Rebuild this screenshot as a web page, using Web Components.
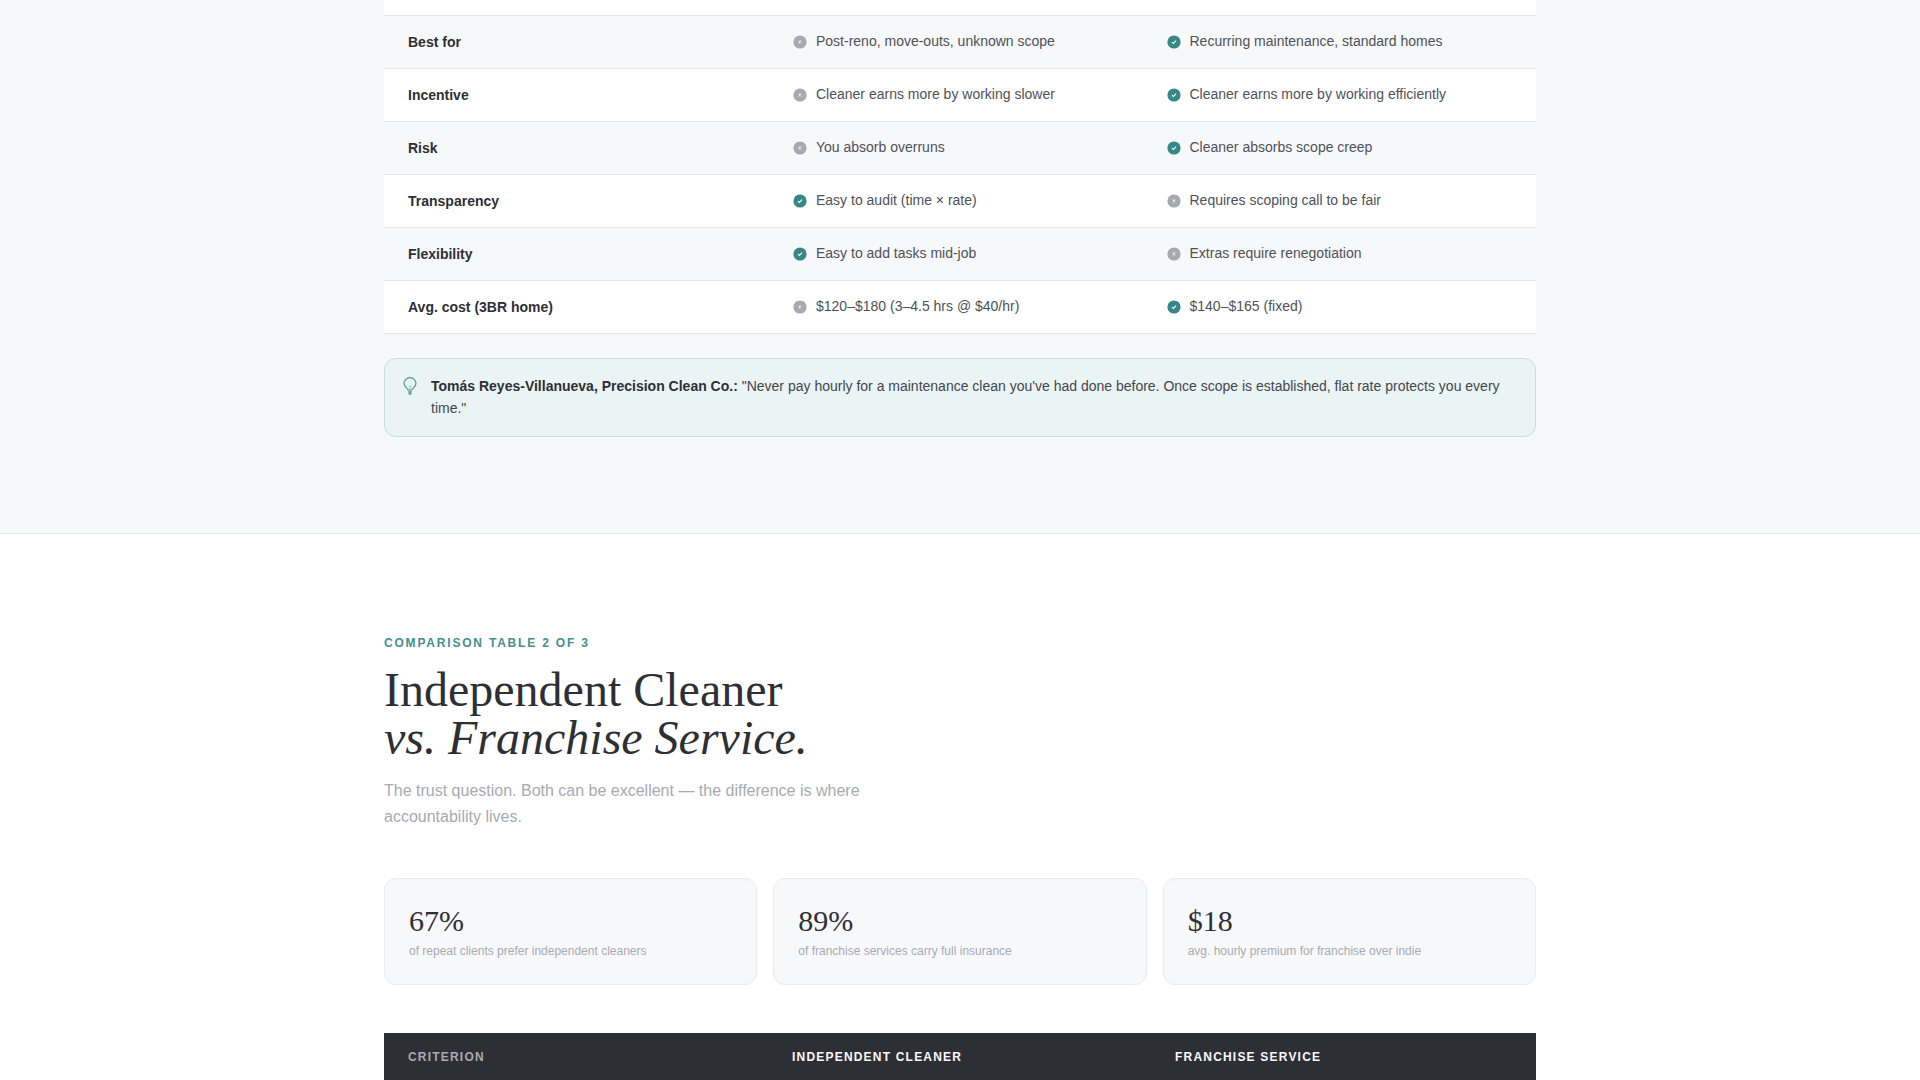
<!DOCTYPE html>
<html><head><meta charset="utf-8">
<style>
html,body{margin:0;padding:0;height:1080px;overflow:hidden;background:#fff;font-family:"Liberation Sans",Arial,sans-serif}
</style></head><body>
<cmp-page>
  <cmp-section tone="alt" class="first">
    <cmp-table cols="385px 373.5px 393.5px">
      <cmp-strip></cmp-strip>
      <cmp-row label="Best for" shade><cmp-val kind="no">Post-reno, move-outs, unknown scope</cmp-val><cmp-val kind="yes">Recurring maintenance, standard homes</cmp-val></cmp-row>
      <cmp-row label="Incentive"><cmp-val kind="no">Cleaner earns more by working slower</cmp-val><cmp-val kind="yes">Cleaner earns more by working efficiently</cmp-val></cmp-row>
      <cmp-row label="Risk" shade><cmp-val kind="no">You absorb overruns</cmp-val><cmp-val kind="yes">Cleaner absorbs scope creep</cmp-val></cmp-row>
      <cmp-row label="Transparency"><cmp-val kind="yes">Easy to audit (time × rate)</cmp-val><cmp-val kind="no">Requires scoping call to be fair</cmp-val></cmp-row>
      <cmp-row label="Flexibility" shade><cmp-val kind="yes">Easy to add tasks mid-job</cmp-val><cmp-val kind="no">Extras require renegotiation</cmp-val></cmp-row>
      <cmp-row label="Avg. cost (3BR home)"><cmp-val kind="no">$120–$180 (3–4.5 hrs @ $40/hr)</cmp-val><cmp-val kind="yes">$140–$165 (fixed)</cmp-val></cmp-row>
    </cmp-table>
    <cmp-callout><strong>Tomás Reyes-Villanueva, Precision Clean Co.:</strong> "Never pay hourly for a maintenance clean you've had done before. Once scope is established, flat rate protects you every time."</cmp-callout>
  </cmp-section>
  <cmp-section>
    <cmp-heading eyebrow="COMPARISON TABLE 2 OF 3" line1="Independent Cleaner" line2="vs. Franchise Service.">The trust question. Both can be excellent — the difference is where accountability lives.</cmp-heading>
    <cmp-stats>
      <cmp-stat value="67%">of repeat clients prefer independent cleaners</cmp-stat>
      <cmp-stat value="89%">of franchise services carry full insurance</cmp-stat>
      <cmp-stat value="$18">avg. hourly premium for franchise over indie</cmp-stat>
    </cmp-stats>
    <cmp-table cols="384px 383px 385px">
      <cmp-head a="CRITERION" b="INDEPENDENT CLEANER" c="FRANCHISE SERVICE"></cmp-head>
    </cmp-table>
  </cmp-section>
</cmp-page>
<script>
function def(name, html){
  customElements.define(name, class extends HTMLElement{
    connectedCallback(){
      if(this.shadowRoot) return;
      const r=this.attachShadow({mode:'open'});
      r.innerHTML=typeof html==='function'?html(this):html;
    }
  });
}
def('cmp-page',`<style>:host{display:block;height:1080px;overflow:hidden}</style><slot></slot>`);
def('cmp-section',el=>{
  const alt=el.getAttribute('tone')==='alt', first=el.classList.contains('first');
  return `<style>:host{display:block;background:${alt?'#f7f8fa':'#fff'};${alt?'border-bottom:1px solid #e5e7eb;':''}padding:${first?'0':'96px'} 384px 96px}</style><slot></slot>`;
});
def('cmp-table',el=>`<style>:host{display:block;--cols:${el.getAttribute('cols')}}</style><slot></slot>`);
def('cmp-strip',`<style>:host{display:block;height:15px;background:#fff;border-bottom:1px solid #e5e7eb}</style>`);
def('cmp-row',el=>`<style>
:host{display:grid;grid-template-columns:var(--cols);height:52px;align-items:center;box-sizing:content-box;border-bottom:1px solid #e5e7eb;background:${el.hasAttribute('shade')?'#f7f8fa':'#fff'}}
.l{padding-left:24px;font:700 14px/20px "Liberation Sans",sans-serif;color:#2e2f35}
</style><div class="l">${el.getAttribute('label')}</div><slot></slot>`);
const ICONS={
 yes:`<svg width="14" height="14" viewBox="0 0 14 14"><circle cx="7" cy="7" r="6.6" fill="#358886"/><path d="M5 7.2 6.4 8.5 9 5.6" fill="none" stroke="#fff" stroke-width="1.1"/></svg>`,
 no:`<svg width="14" height="14" viewBox="0 0 14 14"><circle cx="7" cy="7" r="6.6" fill="#a7a9b1"/><path d="M5.7 5.7 8.3 8.3M8.3 5.7 5.7 8.3" fill="none" stroke="#fff" stroke-width="1.1" opacity=".75"/></svg>`
};
def('cmp-val',el=>`<style>
:host{display:flex;align-items:center;gap:9px;padding:0 0 2px 24px;font:400 14px/20px "Liberation Sans",sans-serif;color:#4f5158}
svg{flex:none;position:relative;top:1px}
</style>${ICONS[el.getAttribute('kind')]}<span><slot></slot></span>`);
def('cmp-callout',`<style>
:host{display:flex;gap:13px;align-items:flex-start;margin-top:24px;padding:16px 20px 17px 17px;background:#eaf4f4;border:1px solid #c5dedd;border-radius:12px;font:400 14px/22px "Liberation Sans",sans-serif;color:#44464d}
::slotted(strong){color:#2e2f35;font-weight:700}
svg{flex:none;margin-top:2px}
</style><svg width="16" height="18" viewBox="0 0 16 18" fill="none" stroke="#4f9a97" stroke-width="1.2"><path d="M6 13C5.8 11.2 2 10 2 6.6a6 6 0 0 1 12 0c0 3.4-3.800 4.600-4 6.400Z"/><path d="M8 13V9.500M6.600 8.500 8 9.700 9.400 8.500" stroke-width=".8" opacity=".6"/><path d="M6.300 14h3.400v2.300L8.800 18H7.200L6.300 16.300Z" fill="#6aa9a6" stroke="none"/></svg><div><slot></slot></div>`);
def('cmp-heading',el=>`<style>
:host{display:block}
.e{font:700 12px/14px "Liberation Sans",sans-serif;letter-spacing:.15em;color:#458f8d;margin:6px 0 16px}
h2{margin:0 0 16px;font:400 48px/48px "Liberation Serif",serif;color:#2e2f35}
em{display:block;font-style:italic}
p{margin:0;width:520px;font:400 16px/26px "Liberation Sans",sans-serif;color:#a8aab2}
</style><div class="e">${el.getAttribute('eyebrow')}</div><h2>${el.getAttribute('line1')}<em>${el.getAttribute('line2')}</em></h2><p><slot></slot></p>`);
def('cmp-stats',`<style>:host{display:grid;grid-template-columns:repeat(3,1fr);gap:16px;margin:48px 0}</style><slot></slot>`);
def('cmp-stat',el=>`<style>
:host{display:block;box-sizing:border-box;height:107px;padding:24px;background:#f7f8fa;border:1px solid #e8eaed;border-radius:12px}
.v{font:400 30px/36px "Liberation Serif",serif;color:#2e2f35}
.t{font:400 12px/16px "Liberation Sans",sans-serif;color:#a8aab2;margin-top:4px}
</style><div class="v">${el.getAttribute('value')}</div><div class="t"><slot></slot></div>`);
def('cmp-head',el=>`<style>
:host{display:grid;grid-template-columns:var(--cols);background:#2e2f35;height:48px;align-items:center;font:700 12px/16px "Liberation Sans",sans-serif;letter-spacing:.1em;color:#f7f8fa}
div{padding-left:24px}
.a{color:#a8aab2}
</style><div class="a">${el.getAttribute('a')}</div><div>${el.getAttribute('b')}</div><div>${el.getAttribute('c')}</div>`);
</script>
</body></html>
